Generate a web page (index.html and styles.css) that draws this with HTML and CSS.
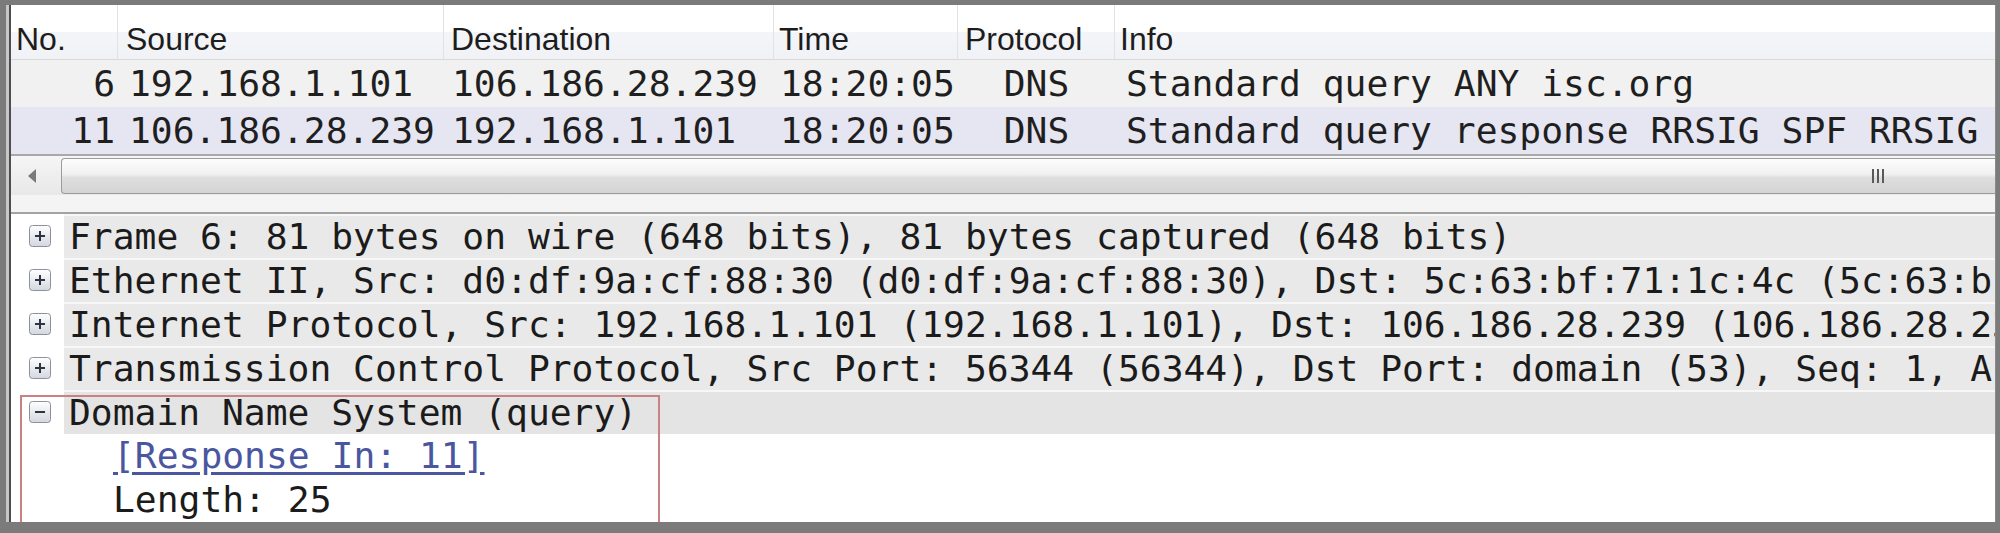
FILE: index.html
```html
<!DOCTYPE html>
<html>
<head>
<meta charset="utf-8">
<link rel="stylesheet" href="styles.css">
</head>
<body>
<div class="frame">
  <div class="window">
    <div class="plist">
      <div class="phead">
        <div class="hc h-no">No.</div>
        <div class="hc h-src">Source</div>
        <div class="hc h-dst">Destination</div>
        <div class="hc h-time">Time</div>
        <div class="hc h-proto">Protocol</div>
        <div class="hc h-info">Info</div>
      </div>
      <div class="prow r1">
        <div class="pc no">6</div>
        <div class="pc src">192.168.1.101</div>
        <div class="pc dst">106.186.28.239</div>
        <div class="pc time">18:20:05</div>
        <div class="pc proto">DNS</div>
        <div class="pc info">Standard query ANY isc.org</div>
      </div>
      <div class="prow r2">
        <div class="pc no">11</div>
        <div class="pc src">106.186.28.239</div>
        <div class="pc dst">192.168.1.101</div>
        <div class="pc time">18:20:05</div>
        <div class="pc proto">DNS</div>
        <div class="pc info">Standard query response RRSIG SPF RRSIG</div>
      </div>
    </div>
    <div class="plist-end"></div>
    <div class="hscroll">
      <div class="arrowbox">
        <svg width="10" height="16" viewBox="0 0 10 16"><polygon points="9,1 9,15 1,8" fill="#7a7a7a"/></svg>
      </div>
      <div class="thumb"><span class="grip"></span></div>
    </div>
    <div class="splitgap"></div>
    <div class="tree">
      <div class="node top">
        <div class="expcell"><svg class="exp" width="22" height="22" viewBox="0 0 22 22"><defs><linearGradient id="eg" x1="0" y1="0" x2="0" y2="1"><stop offset="0" stop-color="#ffffff"/><stop offset="1" stop-color="#d3d7df"/></linearGradient></defs><rect x="0.5" y="0.5" width="21" height="21" rx="3" fill="url(#eg)" stroke="#8c919b"/><path d="M6 11h10M11 6v10" stroke="#2e3442" stroke-width="2"/></svg></div>
        <div class="label">Frame 6: 81 bytes on wire (648 bits), 81 bytes captured (648 bits)</div>
      </div>
      <div class="node top">
        <div class="expcell"><svg class="exp" width="22" height="22" viewBox="0 0 22 22"><rect x="0.5" y="0.5" width="21" height="21" rx="3" fill="url(#eg)" stroke="#8c919b"/><path d="M6 11h10M11 6v10" stroke="#2e3442" stroke-width="2"/></svg></div>
        <div class="label">Ethernet II, Src: d0:df:9a:cf:88:30 (d0:df:9a:cf:88:30), Dst: 5c:63:bf:71:1c:4c (5c:63:bf:71:1c:4c)</div>
      </div>
      <div class="node top">
        <div class="expcell"><svg class="exp" width="22" height="22" viewBox="0 0 22 22"><rect x="0.5" y="0.5" width="21" height="21" rx="3" fill="url(#eg)" stroke="#8c919b"/><path d="M6 11h10M11 6v10" stroke="#2e3442" stroke-width="2"/></svg></div>
        <div class="label">Internet Protocol, Src: 192.168.1.101 (192.168.1.101), Dst: 106.186.28.239 (106.186.28.239)</div>
      </div>
      <div class="node top">
        <div class="expcell"><svg class="exp" width="22" height="22" viewBox="0 0 22 22"><rect x="0.5" y="0.5" width="21" height="21" rx="3" fill="url(#eg)" stroke="#8c919b"/><path d="M6 11h10M11 6v10" stroke="#2e3442" stroke-width="2"/></svg></div>
        <div class="label">Transmission Control Protocol, Src Port: 56344 (56344), Dst Port: domain (53), Seq: 1, Ack: 1, Len: 27</div>
      </div>
      <div class="node top dns">
        <div class="expcell"><svg class="exp" width="22" height="22" viewBox="0 0 22 22"><rect x="0.5" y="0.5" width="21" height="21" rx="3" fill="url(#eg)" stroke="#8c919b"/><path d="M6 11h10" stroke="#2e3442" stroke-width="2"/></svg></div>
        <div class="label">Domain Name System (query)</div>
      </div>
      <div class="node child">
        <div class="expcell"></div>
        <div class="label"><a class="link">[Response In: 11]</a></div>
      </div>
      <div class="node child">
        <div class="expcell"></div>
        <div class="label">Length: 25</div>
      </div>
      <div class="redbox"></div>
    </div>
  </div>
</div>
</body>
</html>
```

FILE: styles.css
```css
* { box-sizing: border-box; }
html, body { margin: 0; padding: 0; }
body {
  width: 2000px;
  height: 533px;
  background: #7b7b7b;
  overflow: hidden;
}
.frame {
  height: 533px;
  padding: 5px 4px 11px 6px;
}
.window {
  margin-left: 3px;
  height: 517px;
  background: #ffffff;
  border-left: 2px solid #4e4e4e;
  border-right: 1px solid #8a8a8a;
  box-shadow: -3px 0 0 #c7c7c7;
  overflow: hidden;
  display: flex;
  flex-direction: column;
}

/* packet list */
.phead, .prow {
  display: grid;
  grid-template-columns: 107px 326px 330px 184px 157px 1fr;
}
.phead {
  height: 55px;
  border-bottom: 1px solid #d9d9d9;
  background: linear-gradient(#ffffff 0, #ffffff 50%, #f4f5f8 50%, #f1f2f5 100%);
  font-family: "Liberation Sans", Arial, sans-serif;
  font-size: 32px;
  color: #1d1d1d;
}
.hc {
  padding-top: 18px;
  line-height: 32px;
  border-right: 1px solid #e2e2e2;
  white-space: nowrap;
  overflow: hidden;
}
.h-no { padding-left: 5px; }
.h-src { padding-left: 8px; }
.h-dst { padding-left: 7px; }
.h-time { padding-left: 5px; }
.h-proto { padding-left: 7px; }
.h-info { padding-left: 5px; border-right: none; }

.prow {
  height: 47px;
  line-height: 47px;
  font-family: "DejaVu Sans Mono", "Liberation Mono", monospace;
  font-size: 36.3px;
  color: #1f1f1f;
  white-space: nowrap;
}
.r1 { background: #f1f1f1; }
.r2 { background: #e6e6f3; }
.pc { overflow: hidden; }
.pc.no { text-align: right; padding-right: 3px; }
.pc.src { padding-left: 11px; }
.pc.dst { padding-left: 8px; }
.pc.time { padding-left: 6px; }
.pc.proto { text-align: center; }
.pc.info { padding-left: 11px; }

.plist-end {
  height: 2px;
  background: #a9a9a9;
}

/* horizontal scrollbar */
.hscroll {
  height: 39px;
  display: flex;
  align-items: center;
  background: linear-gradient(#f5f5f5, #e8e8e8);
}
.arrowbox {
  width: 50px;
  height: 100%;
  display: flex;
  align-items: center;
  justify-content: center;
  padding-right: 8px;
}
.thumb {
  flex: 1;
  height: 36px;
  border: 1px solid #9c9c9c;
  border-right: none;
  border-radius: 4px 0 0 4px;
  background: linear-gradient(#fdfdfd 0%, #f0f0f0 45%, #dedede 55%, #d4d4d4 100%);
  display: flex;
  align-items: center;
  justify-content: flex-end;
  padding-right: 110px;
}
.grip {
  width: 13px;
  height: 14px;
  background: repeating-linear-gradient(90deg, #5a5a5a 0 2px, transparent 2px 5px);
}
.splitgap {
  height: 19px;
  background: #f4f4f4;
  border-bottom: 2px solid #a3a3a3;
}

/* details tree */
.tree {
  position: relative;
  flex: 1;
  font-family: "DejaVu Sans Mono", "Liberation Mono", monospace;
  font-size: 36.3px;
  color: #1b1b1b;
}
.node {
  display: flex;
  height: 44px;
  white-space: nowrap;
}
.expcell {
  width: 53px;
  flex: none;
  display: flex;
  align-items: center;
  padding-left: 18px;
}
.exp { display: block; }
.label {
  flex: 1;
  overflow: hidden;
  line-height: 44px;
  padding-left: 5px;
}
.node.top .label {
  background: #e9e9e9;
  border-top: 2px solid #f7f7f7;
  line-height: 42px;
}
.node.dns .label { background: #e4e4e4; }
.node.child .label { padding-left: 49px; }
.link {
  color: #4a56a0;
  text-decoration: underline;
  text-underline-offset: 4px;
}
.redbox {
  position: absolute;
  left: 9px;
  top: 181px;
  width: 640px;
  bottom: -8px;
  border: 2px solid #c98282;
  pointer-events: none;
}
```
